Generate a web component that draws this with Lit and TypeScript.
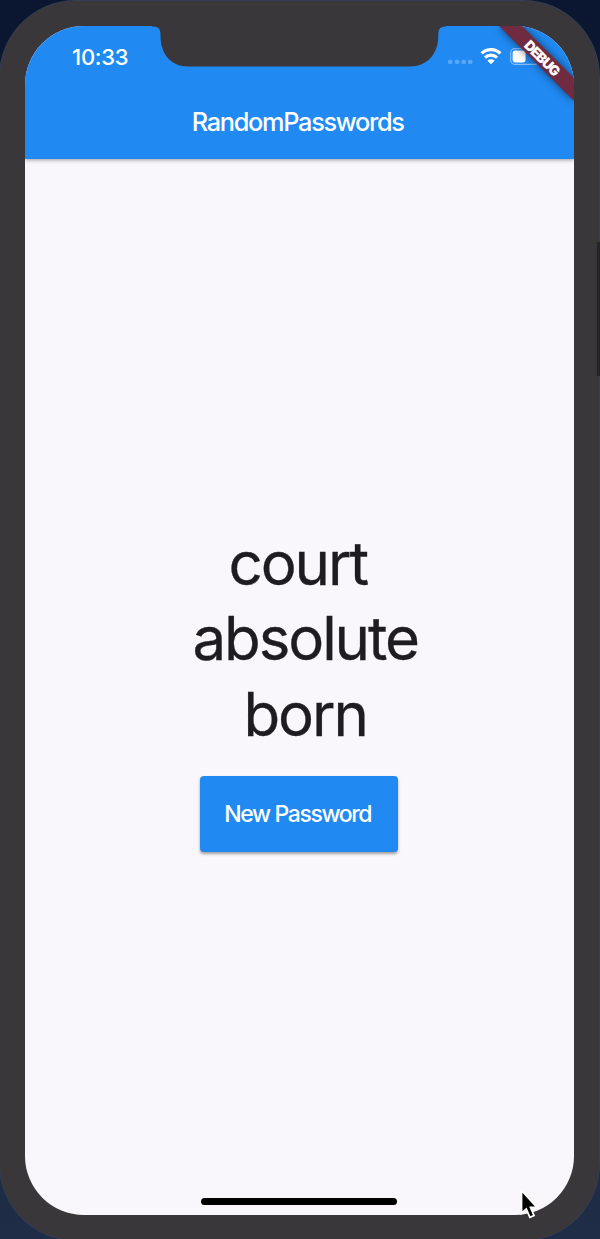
import { LitElement, html, css } from "lit";
import { customElement, state } from "lit/decorators.js";

@customElement("status-bar")
class StatusBar extends LitElement {
  static styles = css`
    :host { display: flex; justify-content: space-between; height: 60px; box-sizing: border-box; padding: 17px 24px 0 47px; color: #fff; }
    .time { font: 500 22px/28px Inter, sans-serif; letter-spacing: -0.25px; }
    .icons { width: 108px; height: 30px; flex: none; }
  `;
  render() {
    return html`
      <span class="time">10:33</span>
      <svg class="icons" viewBox="442 43 108 30" fill="none">
        <g fill="#fff" fill-opacity=".25">
          <rect x="448" y="59.7" width="4.4" height="4.4" rx="1.5" /><rect x="454.9" y="59.7" width="4.4" height="4.4" rx="1.5" />
          <rect x="461.5" y="59.7" width="4.4" height="4.4" rx="1.5" /><rect x="468" y="59.7" width="4.4" height="4.4" rx="1.5" />
        </g>
        <g stroke="#fff" stroke-width="3.2">
          <path d="M481.6 53.4a13.5 13.5 0 0 1 18.8 0" />
          <path d="M485 57.6a8.6 8.6 0 0 1 12 0" />
        </g>
        <path fill="#fff" d="M487.400 60.700a5.200 5.200 0 0 1 7.200 0L491 64.300z" />
        <rect x="510.700" y="48.700" width="29" height="15.600" rx="4.200" stroke="#fff" stroke-opacity=".45" stroke-width="1.200" />
        <rect x="512.600" y="50.600" width="13" height="11.800" rx="2.400" fill="#fff" />
      </svg>`;
  }
}

@customElement("app-root")
class AppRoot extends LitElement {
  static styles = css`
    :host { display: block; width: 600px; height: 1239px; overflow: hidden; background: linear-gradient(#0b1730, #111d35 45%, #202d47); font-family: Inter, sans-serif; }
    .desk { position: relative; width: 600px; height: 1239px; overflow: hidden; }
    .desk::after { content: ""; position: absolute; right: 0; top: 242px; width: 3px; height: 134px; background: #252426; }
    .phone { box-sizing: border-box; width: 598.5px; height: 1239px; margin-top: 1px; padding: 25px 25px 24px; border-radius: 76px; background: #393739; box-shadow: 0 0 0 1px #343d52; }
    .screen { position: relative; display: flex; flex-direction: column; height: 1189px; border-radius: 59px; overflow: hidden; background: #f9f7fb; }
    .top { flex: none; height: 132.5px; background: #208af2; box-shadow: 0 1px 4px rgba(0, 0, 0, .38); }
    .title { margin: 0; height: 72px; padding-right: 3px; font-size: 25.3px; line-height: 72px; font-weight: 500; letter-spacing: -1.3px; text-align: center; color: #fff; }
    .body { flex: 1; display: flex; flex-direction: column; align-items: center; padding-top: 367px; }
    .words { padding-right: 3px; font-size: 60px; line-height: 75.5px; letter-spacing: -2.1px; text-align: center; white-space: pre; color: #1e1c20; -webkit-text-stroke: .3px #1e1c20; }
    .button { width: 198px; height: 76px; margin-top: 24px; padding: 0 3px 0 0; border: 0; border-radius: 4px; background: #208af2; color: #fff; font: 500 23px/76px Inter, sans-serif; letter-spacing: -1.38px; box-shadow: 0 2px 3px rgba(0, 0, 0, .36); }
    .home { width: 196px; height: 7px; margin: auto 0 10.5px; border-radius: 4px; background: #000; }
    .notch { position: absolute; left: 127px; top: 0; width: 294px; height: 41px; }
    .ribbon { position: absolute; right: 0; top: 0; width: 100px; height: 100px; }
    .debug { font: 900 13.8px Inter, sans-serif; letter-spacing: -1px; }
    .cursor { position: absolute; left: 518px; top: 1186px; width: 22px; height: 34px; }
  `;

  @state() words = ["court", "absolute", "born"];

  render() {
    return html`
      <div class="desk">
        <div class="phone">
          <div class="screen">
            <header class="top">
              <status-bar></status-bar>
              <h1 class="title">RandomPasswords</h1>
            </header>
            <main class="body">
              <div class="words">${this.words.join("\n ")}</div>
              <button class="button">New Password</button>
              <div class="home"></div>
            </main>
            <svg class="ribbon" viewBox="0 0 100 100">
              <defs><filter id="soft" x="-30%" y="-30%" width="160%" height="160%"><feGaussianBlur stdDeviation="4" /></filter></defs>
              <path d="M25 0H48L100 52V75Z" fill="#000" opacity=".55" filter="url(#soft)" />
              <path d="M25 0H48L100 52V75Z" fill="#702b41" />
              <text class="debug" x="68" y="37" fill="#fff" text-anchor="middle" transform="rotate(45 68 32)">DEBUG</text>
            </svg>
            <svg class="notch" viewBox="0 0 294 41">
              <path fill="#393739" d="M0 0H294V.5H293Q286.500 .5 286.300 7V10C286.300 28 275 40.500 258 40.500H36C19 40.500 8.500 28 8.500 10V7Q8 .5 1.500 .5H0Z" />
            </svg>
          </div>
        </div>
        <svg class="cursor" viewBox="0 0 22 34">
          <path d="M3.500 4.500V27.200L8.300 22.900L11.900 31.300L16 29.500L12.500 21.400H19Z" fill="#000" stroke="#fff" stroke-width="1.800" />
        </svg>
      </div>`;
  }
}
